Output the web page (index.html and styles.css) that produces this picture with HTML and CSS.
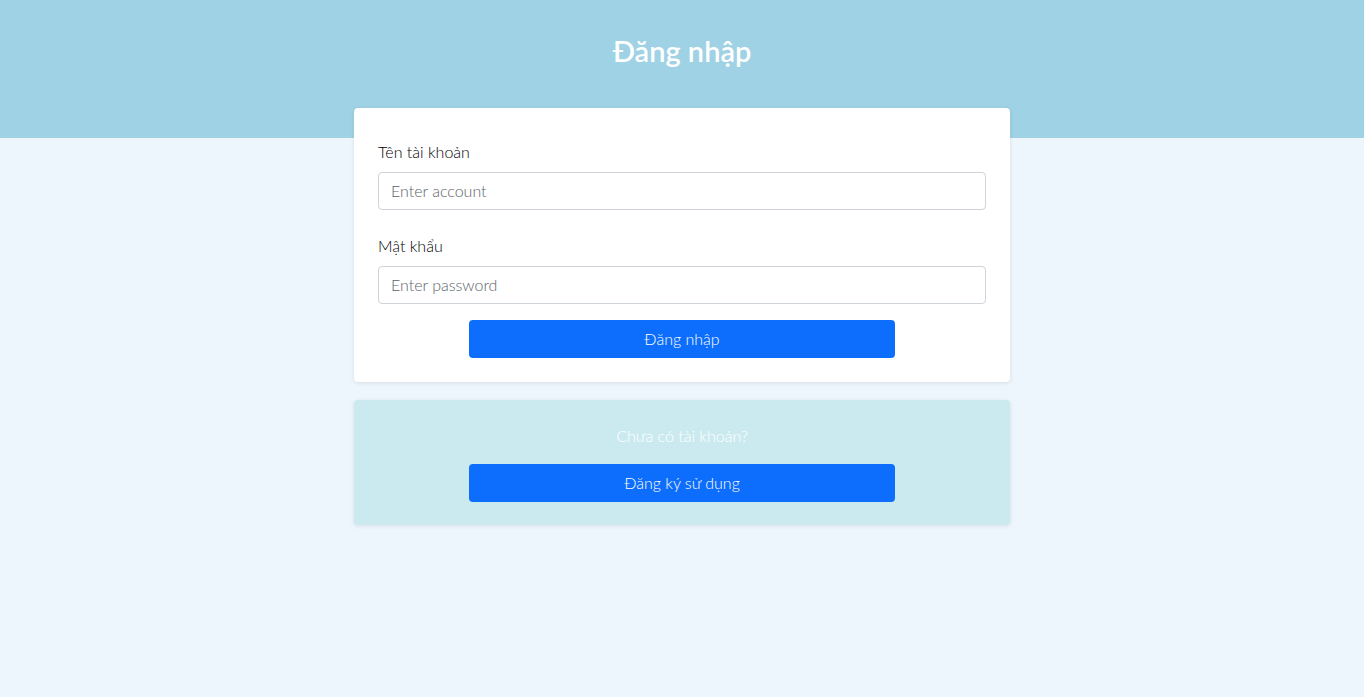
FILE: index.html
```html
<!DOCTYPE html>
<html lang="vi">
<head>
<meta charset="utf-8">
<title>Đăng nhập</title>
<link rel="stylesheet" href="styles.css">
</head>
<body>
<header class="hero">
  <h1 class="hero-title">Đăng nhập</h1>
</header>
<main class="wrap">
  <form class="card login-card">
    <div class="field">
      <label class="field-label" for="account">Tên tài khoản</label>
      <input class="field-input" id="account" type="text" placeholder="Enter account">
    </div>
    <div class="field">
      <label class="field-label" for="password">Mật khẩu</label>
      <input class="field-input" id="password" type="password" placeholder="Enter password">
    </div>
    <div class="actions">
      <button class="btn" type="button">Đăng nhập</button>
    </div>
  </form>
  <section class="card signup-card">
    <p class="signup-text">Chưa có tài khoản?</p>
    <div class="actions">
      <button class="btn" type="button">Đăng ký sử dụng</button>
    </div>
  </section>
</main>
</body>
</html>
```
FILE: styles.css
```css
* { box-sizing: border-box; }
html, body { margin: 0; padding: 0; }
body {
  background: #eef6fd;
  font-family: Lato, "Noto Sans", sans-serif;
  font-weight: 300;
  color: #212529;
  min-height: 697px;
}
.hero {
  background: #9fd2e5;
  height: 138px;
  padding-top: 31px;
  text-align: center;
}
.hero-title {
  margin: 0;
  color: #fff;
  font-size: 29px;
  line-height: 40px;
  font-weight: 600;
}
.wrap {
  width: 656px;
  margin: -30px auto 0;
  display: flex;
  flex-direction: column;
  gap: 18px;
}
.card {
  border-radius: 4px;
  box-shadow: 0 1px 4px rgba(0,0,0,0.10);
}
.login-card {
  background: #fff;
  padding: 32px 24px 24px;
  display: flex;
  flex-direction: column;
}
.field { display: flex; flex-direction: column; margin-bottom: 24px; }
.field:nth-of-type(2) { margin-bottom: 16px; }
.field-label {
  font-size: 16px;
  line-height: 24px;
  margin-bottom: 8px;
  color: #000;
  font-weight: 300;
}
.field-input {
  height: 38px;
  border: 1px solid #ced4da;
  border-radius: 4px;
  padding: 0 12px 1px;
  font: inherit;
  font-size: 16px;
  color: #212529;
  background: #fff;
}
.field-input::placeholder { color: #5c636a; }
.actions { display: flex; justify-content: center; }
.btn {
  width: 426px;
  height: 38px;
  border: 0;
  border-radius: 4px;
  background: #0d6efd;
  color: #fff;
  font: inherit;
  font-size: 16px;
  padding-bottom: 3px;
  cursor: pointer;
}
.signup-card {
  background: #cbeaf0;
  padding: 24px 24px 23px;
}
.signup-text {
  margin: 0 0 16px;
  text-align: center;
  color: #fff;
  font-size: 16px;
  line-height: 24px;
}
```
